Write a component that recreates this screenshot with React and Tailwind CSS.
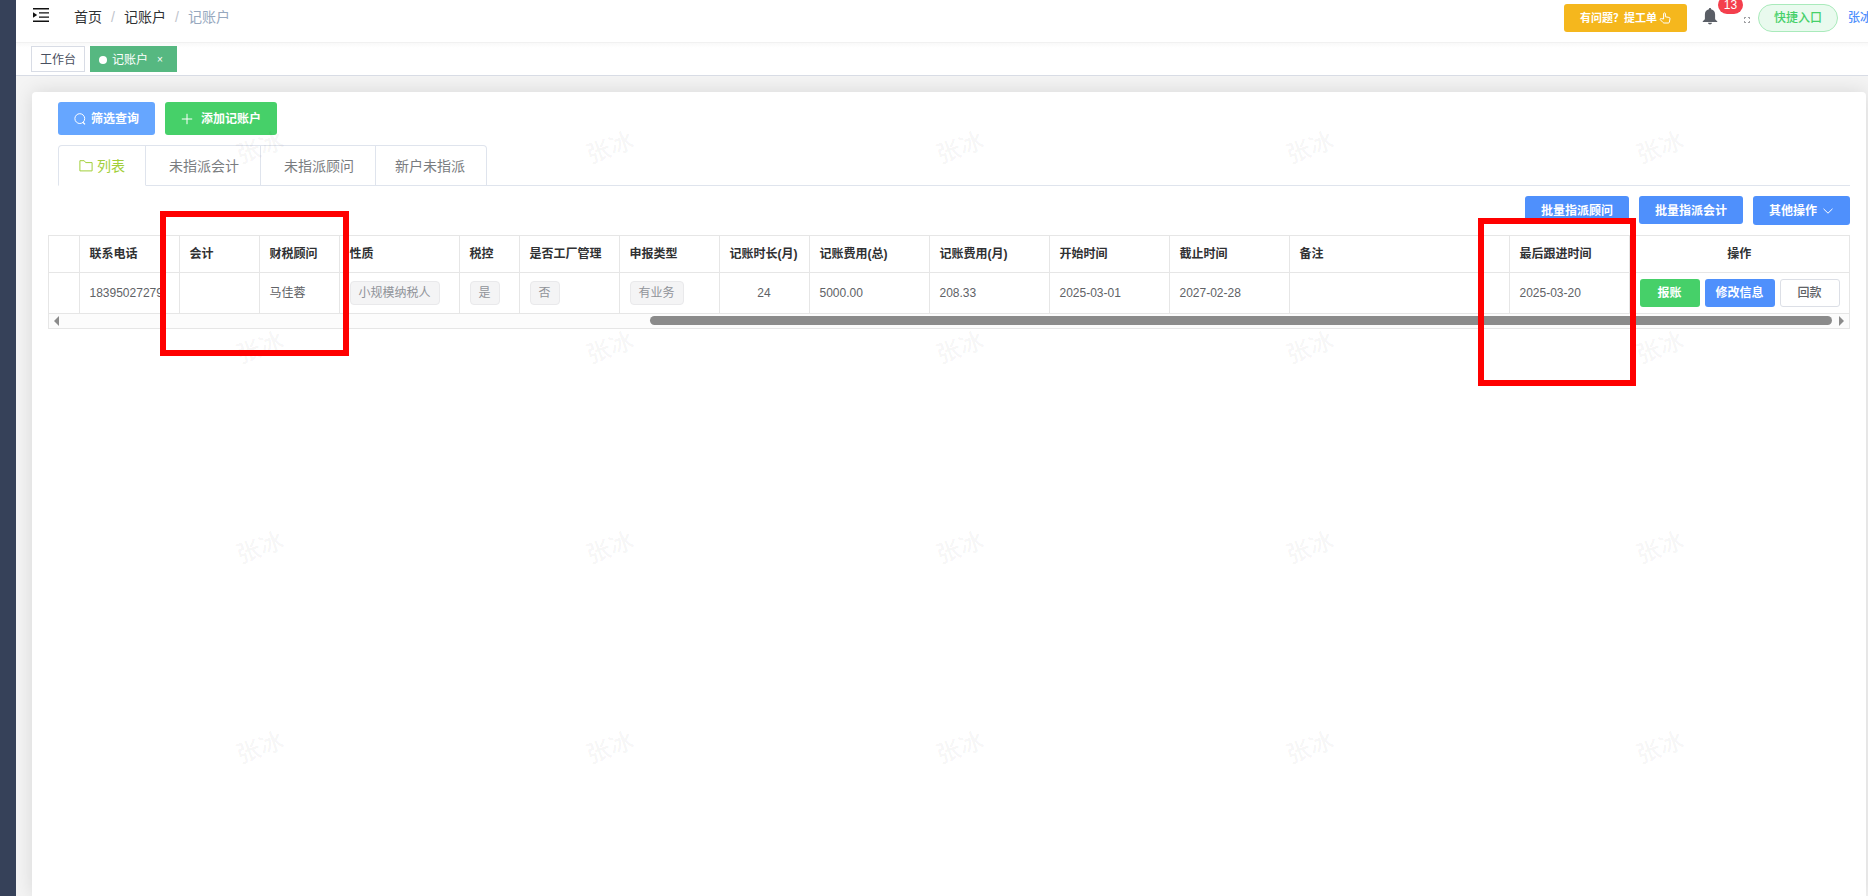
import { clsx } from 'clsx'

const WATERMARK = '张冰'

const TABS = [
  { label: '列表', active: true },
  { label: '未指派会计' },
  { label: '未指派顾问' },
  { label: '新户未指派' }
]

// Table columns, the one without a width takes the remaining space
const COLUMNS = [
  { key: 'index', title: '', width: 'w-[30px]' },
  { key: 'phone', title: '联系电话', width: 'w-[100px]' },
  { key: 'accountant', title: '会计', width: 'w-[80px]' },
  { key: 'adviser', title: '财税顾问', width: 'w-[80px]' },
  { key: 'nature', title: '性质', width: 'w-[120px]', tag: true },
  { key: 'taxControl', title: '税控', width: 'w-[60px]', tag: true },
  { key: 'factory', title: '是否工厂管理', width: 'w-[100px]', tag: true },
  { key: 'declareType', title: '申报类型', width: 'w-[100px]', tag: true },
  { key: 'months', title: '记账时长(月)', width: 'w-[90px]', center: true },
  { key: 'totalFee', title: '记账费用(总)', width: 'w-[120px]' },
  { key: 'monthFee', title: '记账费用(月)', width: 'w-[120px]' },
  { key: 'startDate', title: '开始时间', width: 'w-[120px]' },
  { key: 'endDate', title: '截止时间', width: 'w-[120px]' },
  { key: 'remark', title: '备注', width: '' },
  { key: 'lastFollow', title: '最后跟进时间', width: 'w-[120px]' }
]

const ROWS = [
  {
    id: 1,
    index: '',
    phone: '18395027279',
    accountant: '',
    adviser: '马佳蓉',
    nature: '小规模纳税人',
    taxControl: '是',
    factory: '否',
    declareType: '有业务',
    months: '24',
    totalFee: '5000.00',
    monthFee: '208.33',
    startDate: '2025-03-01',
    endDate: '2027-02-28',
    remark: '',
    lastFollow: '2025-03-20'
  }
]

function FoldIcon() {
  return (
    <svg viewBox="0 0 16 14" className="w-4 h-3.5" fill="#111" aria-hidden="true">
      <path d="M0 0h16v1.4H0zM6 4.2h10v1.4H6zM6 8.4h10v1.4H6zM0 12.6h16V14H0zM0 4.2 4.2 7 0 9.8z" />
    </svg>
  )
}

function SearchIcon() {
  return (
    <svg viewBox="0 0 12 12" className="w-3 h-3" fill="none" stroke="currentColor" aria-hidden="true">
      <circle cx="5.8" cy="5.6" r="4.9" />
      <path d="m8.800 9.200 2.200 2.200" strokeWidth="1.300" />
    </svg>
  )
}

function PlusIcon() {
  return (
    <svg viewBox="0 0 12 12" className="w-3 h-3" fill="none" stroke="currentColor" aria-hidden="true">
      <path d="M6 .8v10.4M.8 6h10.4" />
    </svg>
  )
}

function FolderIcon() {
  return (
    <svg viewBox="0 0 14 14" className="w-3.5 h-3.5" fill="none" stroke="currentColor" aria-hidden="true">
      <path d="M.9 1.700h4.300l1.500 1.900h6.400v8.300H.9z" strokeLinejoin="round" />
    </svg>
  )
}

function ChevronIcon() {
  return (
    <svg viewBox="0 0 12 12" className="w-3 h-3" fill="none" stroke="currentColor" aria-hidden="true">
      <path d="m1.5 3.8 4.5 4.4 4.5-4.4" />
    </svg>
  )
}

function PointerIcon() {
  return (
    <svg viewBox="0 0 12 12" className="w-3 h-3" fill="none" stroke="currentColor" aria-hidden="true">
      <path
        d="M4.6 7V1.8a.9.9 0 0 1 1.8 0v3l3.5.6c.8.1 1.2.6 1.1 1.3l-.6 3.4c-.1.6-.5.9-1.1.9H5.1c-.5 0-.8-.2-1.1-.5L1.3 7.7c-.6-.7.3-1.6 1.1-1.1z"
        strokeLinejoin="round"
      />
    </svg>
  )
}

function BellIcon() {
  return (
    <svg viewBox="0 0 16 17" className="w-4 h-[17px]" fill="#5a5e66" aria-hidden="true">
      <path d="M8 0c.7 0 1.1.5 1.1 1.2 2.5.5 4 2.5 4 5.2v4.2c0 1 .6 1.800 2.1 2.400v.9H.8V13c1.5-.6 2.100-1.400 2.100-2.400V6.400c0-2.700 1.500-4.700 4-5.200C6.900.5 7.300 0 8 0zM6 14.700h4c-.2 1.100-.9 1.700-2 1.700s-1.800-.6-2-1.700z" />
    </svg>
  )
}

function FullscreenIcon() {
  return (
    <svg viewBox="0 0 6 6" className="w-1.5 h-1.5" fill="none" stroke="#77797d" strokeWidth=".8" aria-hidden="true">
      <path d="M.4 2V.4H2M4 .4h1.600V2M5.600 4v1.600H4M2 5.600H.4V4" />
    </svg>
  )
}

function Header() {
  return (
    <header className="flex h-[43px] items-start justify-between border-b border-[#f1f1f1] bg-white">
      <div className="flex items-center pt-[7px] pl-[17px]">
        <button type="button" aria-label="折叠菜单" className="-mt-1">
          <FoldIcon />
        </button>
        <nav aria-label="面包屑" className="ml-[25px] flex items-center text-sm">
          <a href="#home" className="text-[#303133]">首页</a>
          <span className="w-[22px] text-center text-[#c0c4cc]">/</span>
          <a href="#account" className="text-[#303133]">记账户</a>
          <span className="w-[22px] text-center text-[#c0c4cc]">/</span>
          <span className="text-[#97a8be]">记账户</span>
        </nav>
      </div>

      <div className="flex items-center pt-1">
        <button
          type="button"
          className="flex h-7 w-[123px] items-center justify-center gap-0.5 rounded-[3px] bg-[#f5b71d] text-[11px] font-bold text-white"
        >
          <span>有问题？提工单</span>
          <PointerIcon />
        </button>
        <button type="button" aria-label="消息" className="relative ml-[15px] -mt-1">
          <BellIcon />
          <span className="absolute -top-3 left-4 flex h-[18px] w-[25px] items-center justify-center rounded-full bg-[#f43f4d] text-xs text-white">
            13
          </span>
        </button>
        <button type="button" aria-label="全屏" className="mt-1 ml-[26px]">
          <FullscreenIcon />
        </button>
        <button
          type="button"
          className="ml-2 h-7 w-20 rounded-full border border-[#a9eabb] bg-[#e9faee] text-xs font-medium text-[#46d069]"
        >
          快捷入口
        </button>
        <a href="#user" className="ml-2.5 w-5 overflow-hidden text-xs font-medium whitespace-nowrap text-[#4f90fc]">
          {WATERMARK}
        </a>
      </div>
    </header>
  )
}

function TagsView() {
  return (
    <div className="flex h-[33px] items-start gap-[5px] border-b border-[#d8dce5] bg-linear-to-b from-[#f9f9f9] to-white to-15% pt-[3px] pl-[15px] text-xs">
      <a href="#workbench" className="flex h-[26px] items-center border border-[#d8dce5] bg-white px-2 pt-px text-[#495060]">
        工作台
      </a>
      <div className="flex h-[26px] w-[87px] items-center bg-[#56b881] pt-px pl-[9px] text-white">
        <span className="mr-[5px] h-2 w-2 rounded-full bg-white" />
        <a href="#account">记账户</a>
        <button type="button" aria-label="关闭" className="ml-[9px] text-[10px]">
          ×
        </button>
      </div>
    </div>
  )
}

function Tabs() {
  return (
    <div className="ml-[10px] flex h-[41px] border-b border-[#dfe4ed]" role="tablist">
      {TABS.map((tab, i) => (
        <button
          key={tab.label}
          type="button"
          role="tab"
          aria-selected={Boolean(tab.active)}
          className={clsx(
            'flex h-[41px] items-center gap-1 border-t border-r border-[#dfe4ed] text-sm',
            tab.active
              ? 'w-[88px] justify-center rounded-tl border-l border-b border-b-white text-[#a2cf3b]'
              : 'border-b text-[#7a7c80]',
            !tab.active && (i === TABS.length - 1 ? 'rounded-tr pr-[21px] pl-[19px]' : 'pr-[21px] pl-[23px]')
          )}
        >
          {tab.active && <FolderIcon />}
          {tab.label}
        </button>
      ))}
    </div>
  )
}

function RowActions() {
  return (
    <div className="flex gap-[5px] pl-2.5 font-bold">
      <button type="button" className="h-7 w-[60px] rounded-[3px] bg-[#46d069] text-white">
        报账
      </button>
      <button type="button" className="h-7 w-[70px] rounded-[3px] bg-[#4f90fc] text-white">
        修改信息
      </button>
      <button type="button" className="h-7 w-[60px] rounded-[3px] border border-[#dcdfe6] bg-white font-medium text-[#606266]">
        回款
      </button>
    </div>
  )
}

function AccountTable() {
  return (
    <div className="mt-2.5 border border-[#e6e6e6]">
      <table className="w-full table-fixed border-collapse text-left text-xs">
        <thead>
          <tr className="h-9 border-b border-[#e6e6e6] text-[#303133]">
            {COLUMNS.map((col) => (
              <th
                key={col.key}
                scope="col"
                className={clsx(
                  'border-r border-[#e6e6e6] pl-2.5 font-bold whitespace-nowrap',
                  col.width
                )}
              >
                {col.title}
              </th>
            ))}
            <th scope="col" className="w-[220px] text-center font-bold">操作</th>
          </tr>
        </thead>
        <tbody>
          {ROWS.map((row) => (
            <tr key={row.id} className="h-[41px] border-b border-[#e6e6e6] text-[#606266]">
              {COLUMNS.map((col) => (
                <td
                  key={col.key}
                  className={clsx(
                    'overflow-hidden border-r border-[#e6e6e6] whitespace-nowrap',
                    col.center ? 'text-center' : 'pl-2.5'
                  )}
                >
                  {col.tag ? (
                    <span className="inline-flex h-6 items-center rounded border border-[#e9e9eb] bg-[#f4f4f5] px-2 align-middle text-[#909399]">
                      {row[col.key]}
                    </span>
                  ) : (
                    row[col.key]
                  )}
                </td>
              ))}
              <td>
                <RowActions />
              </td>
            </tr>
          ))}
        </tbody>
      </table>

      {/* Horizontal scroll bar */}
      <div className="flex h-3.5 items-center justify-between bg-[#fcfcfc] px-[5px]">
        <span className="h-0 w-0 border-y-[5px] border-r-[5px] border-y-transparent border-r-[#8b8b8b]" />
        <span className="ml-[33%] h-[9px] flex-1 rounded-full bg-[#8b8b8b]" />
        <span className="ml-[7px] h-0 w-0 border-y-[5px] border-l-[5px] border-y-transparent border-l-[#8b8b8b]" />
      </div>
    </div>
  )
}

function Watermark() {
  return (
    <div
      aria-hidden="true"
      className="pointer-events-none absolute inset-0 grid auto-rows-[200px] grid-cols-[repeat(auto-fill,350px)] overflow-hidden pt-12 pl-[85px]"
    >
      {Array.from({ length: 20 }, (_, i) => (
        <span key={i} className="flex items-center justify-center text-2xl font-medium text-black/5">
          <span className="-rotate-20">{WATERMARK}</span>
        </span>
      ))}
    </div>
  )
}

export default function App() {
  return (
    <div className="relative flex h-screen overflow-hidden bg-[#f4f4f4] font-['Liberation_Sans','Noto_Sans_CJK_SC',sans-serif]">
      <aside className="w-4 shrink-0 bg-[#364159]" />

      <div className="flex min-w-0 flex-1 flex-col">
        <Header />
        <TagsView />

        <main className="flex min-h-0 flex-1 overflow-hidden pt-4 pr-0.5 pl-4">
          <section className="min-w-0 flex-1 rounded-t bg-white px-4 pt-2.5 shadow-[0_0_20px_rgba(0,0,0,0.12)]">
            <div className="flex gap-2.5 pl-2.5 text-xs font-bold text-white">
              <button type="button" className="flex h-[33px] w-[97px] items-center justify-center gap-[5px] rounded-[3px] bg-[#66a6ff]">
                <SearchIcon />
                筛选查询
              </button>
              <button type="button" className="flex h-[33px] w-28 items-center justify-center gap-2 rounded-[3px] bg-[#46d069]">
                <PlusIcon />
                添加记账户
              </button>
            </div>

            <div className="pt-2.5">
              <Tabs />
            </div>

            <div className="flex h-[39px] items-start justify-end gap-2.5 pt-2.5 text-xs font-bold text-white">
              <button type="button" className="h-7 w-[104px] rounded-[3px] bg-[#4f90fc] pt-px">
                批量指派顾问
              </button>
              <button type="button" className="h-7 w-[104px] rounded-[3px] bg-[#4f90fc] pt-px">
                批量指派会计
              </button>
              <button type="button" className="flex h-[29px] w-[97px] items-center justify-center gap-[5px] rounded-[3px] bg-[#4f90fc]">
                其他操作
                <ChevronIcon />
              </button>
            </div>

            <AccountTable />
          </section>
        </main>
      </div>

      <Watermark />

      {/* Highlight boxes over the adviser and follow-up columns */}
      <div className="pointer-events-none absolute top-[211px] left-[160px] h-[145px] w-[189px] border-[6px] border-[#ff0000]" />
      <div className="pointer-events-none absolute top-[218px] right-[232px] h-[168px] w-[158px] border-[6px] border-[#ff0000]" />
    </div>
  )
}
